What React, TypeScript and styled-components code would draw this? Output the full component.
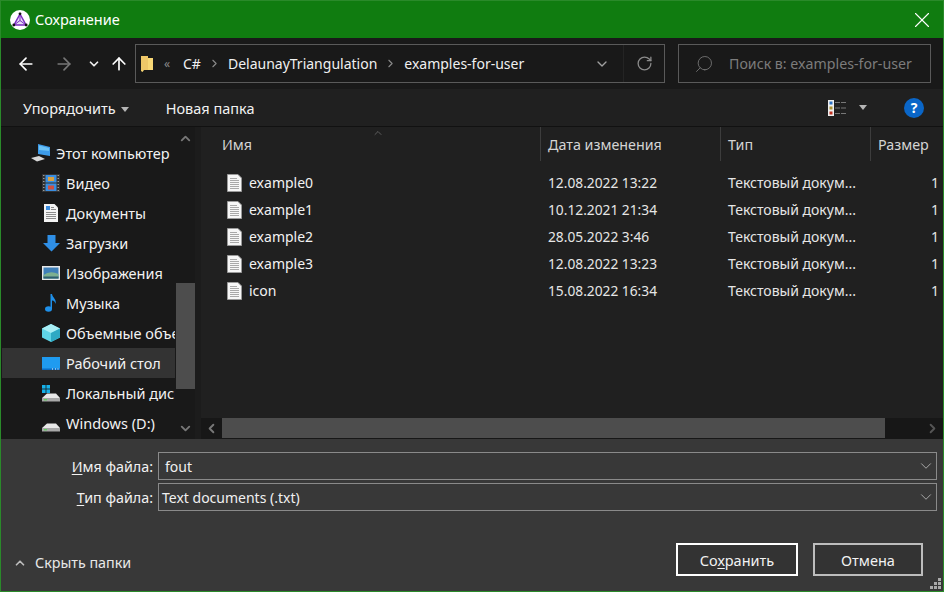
import { FC, ReactNode } from "react";
import styled, { createGlobalStyle } from "styled-components";
import { ArrowLeft, ArrowRight, ArrowUp, ChevronDown, ChevronLeft, ChevronRight, ChevronUp, RotateCw, Search, X } from "lucide-react";

const GlobalStyle = createGlobalStyle`
  html, body { margin: 0; padding: 0; background: #383838; }
  body {
    font-family: "Noto Sans", "Open Sans", sans-serif;
    font-size: 14.5px;
    color: #f2f2f2;
  }
`;

const Window = styled.div`
  width: 944px;
  height: 592px;
  box-sizing: border-box;
  border: 1px solid #2a8a2a;
  display: flex;
  flex-direction: column;
  overflow: hidden;
`;

const TitleBar = styled.div`
  height: 37px;
  flex: none;
  background: #107c10;
  display: flex;
  align-items: center;
  padding: 0 8px 0 9px;
  gap: 5px;
  color: #fff;
`;

const TitleText = styled.span`
  flex: 1;
  padding-bottom: 1px;
`;

const NavBar = styled.div`
  height: 51px;
  flex: none;
  background: #191919;
  display: flex;
  align-items: center;
  padding: 0 0 0 15px;
  box-sizing: border-box;
`;

const NavButtons = styled.div`
  width: 119px;
  flex: none;
  display: flex;
  align-items: center;
`;

const NavSlot = styled.span<{ $left: number }>`
  margin-left: ${(p) => p.$left}px;
  display: flex;
`;

const AddressBox = styled.div`
  width: 530px;
  height: 39px;
  flex: none;
  box-sizing: border-box;
  border: 1px solid #5a5a5a;
  display: flex;
  align-items: center;
  padding-left: 5px;
  font-size: 14px;
`;

const Crumb = styled.span`
  color: #f0f0f0;
  white-space: nowrap;
`;

const CrumbSep = styled.span`
  display: flex;
  width: 27px;
  justify-content: center;
  color: #8a8a8a;
`;

const Dim = styled.span`
  color: #8a8a8a;
  font-size: 12px;
  margin: 0 8px 0 11px;
  width: 11px;
`;

const AddressTail = styled.div`
  margin-left: auto;
  display: flex;
  height: 100%;
  align-items: center;
`;

const AddressChevron = styled.span`
  width: 42px;
  display: flex;
  justify-content: center;
  color: #a0a0a0;
`;

const RefreshSlot = styled.span`
  width: 40px;
  height: 100%;
  border-left: 1px solid #242424;
  display: flex;
  align-items: center;
  justify-content: center;
  color: #8c8c8c;
`;

const SearchBox = styled.div`
  margin-left: 13px;
  width: 253px;
  height: 39px;
  box-sizing: border-box;
  border: 1px solid #5a5a5a;
  display: flex;
  align-items: center;
  padding-left: 15px;
  gap: 15px;
  color: #7c7c7c;
  font-size: 14.2px;
  white-space: nowrap;
`;

const CommandBar = styled.div`
  height: 38px;
  flex: none;
  box-sizing: border-box;
  background: #202020;
  border-bottom: 1px solid #111;
  display: flex;
  align-items: center;
  padding: 0 19px 0 22px;
`;

const Caret = styled.span<{ $gap?: number }>`
  display: inline-block;
  width: 0;
  height: 0;
  border-left: 4.5px solid transparent;
  border-right: 4.5px solid transparent;
  border-top: 5px solid #b5b5b5;
  margin-left: ${(p) => p.$gap ?? 5}px;
  vertical-align: middle;
`;

const CommandItem = styled.span`
  margin-right: 37px;
  white-space: nowrap;
`;

const ViewGroup = styled.div`
  margin-left: auto;
  display: flex;
  align-items: center;
`;

const HelpBadge = styled.span`
  width: 20px;
  height: 20px;
  border-radius: 50%;
  background: #0a66c8;
  color: #fff;
  font-weight: 700;
  font-size: 14px;
  display: flex;
  align-items: center;
  justify-content: center;
  margin-left: 37px;
`;

const Body = styled.div`
  height: 312px;
  flex: none;
  display: flex;
  background: #202020;
`;

const Sidebar = styled.div`
  width: 194px;
  flex: none;
  background: #191919;
  display: flex;
`;

const Tree = styled.div`
  width: 174px;
  flex: none;
  padding-top: 11px;
  overflow: hidden;
  box-sizing: border-box;
`;

const TreeRow = styled.div<{ $active?: boolean; $indent: number }>`
  height: 30px;
  margin-left: 1px;
  display: flex;
  align-items: center;
  gap: 6px;
  padding-left: ${(p) => p.$indent}px;
  background: ${(p) => (p.$active ? "#333" : "transparent")};
  white-space: nowrap;
  overflow: hidden;
`;

const TreeIcon = styled.span`
  width: 18px;
  height: 18px;
  flex: none;
  display: flex;
  align-items: center;
  justify-content: center;
  & svg { flex: none; }
`;

const VScroll = styled.div`
  width: 19px;
  margin-left: 1px;
  flex: none;
  display: flex;
  flex-direction: column;
  align-items: stretch;
  color: #777;
`;

const ScrollEnd = styled.span`
  height: 22px;
  flex: none;
  display: flex;
  align-items: center;
  justify-content: center;
`;

const VTrack = styled.div`
  flex: 1;
  padding-top: 134px;
`;

const VThumb = styled.div`
  height: 106px;
  background: #4d4d4d;
`;

const Gutter = styled.div`
  width: 6px;
  flex: none;
  background: #1c1c1c;
`;

const Main = styled.div`
  flex: 1;
  min-width: 0;
  display: flex;
  flex-direction: column;
  position: relative;
`;

const Columns = styled.div`
  height: 34px;
  flex: none;
  display: grid;
  grid-template-columns: 340px 180px 150px 1fr;
  color: #d4d4d4;
  font-size: 14.3px;
`;

const ColHead = styled.div`
  padding-left: 7px;
  display: flex;
  align-items: center;
  border-right: 1px solid #3d3d3d;
  white-space: nowrap;
  overflow: hidden;
  &:first-child { padding-left: 21px; }
  &:last-child { border-right: 0; }
`;

const SortMark = styled.span`
  position: absolute;
  left: 171px;
  top: 0;
  color: #9a9a9a;
  display: flex;
`;

const FileList = styled.div`
  flex: 1;
  padding-top: 8px;
  overflow: hidden;
`;

const FileRow = styled.div`
  height: 27px;
  display: grid;
  grid-template-columns: 340px 180px 150px 1fr;
  align-items: center;
  white-space: nowrap;
  overflow: hidden;
  font-size: 14px;
`;

const NameCell = styled.div`
  padding-left: 26px;
  display: flex;
  align-items: center;
  gap: 7px;
`;

const Cell = styled.div`
  padding-left: 7px;
  color: #e6e6e6;
  overflow: hidden;
`;

const DateCell = styled(Cell)`
  font-size: 13.75px;
`;

const SizeCell = styled(Cell)`
  padding-left: 60px;
`;

const HScroll = styled.div`
  height: 21px;
  flex: none;
  background: #171717;
  display: flex;
  color: #777;
`;

const HEnd = styled.span`
  width: 21px;
  flex: none;
  display: flex;
  align-items: center;
  justify-content: center;
`;

const HThumb = styled.div`
  width: 663px;
  flex: none;
  background: #4d4d4d;
  margin-bottom: 1px;
`;

const HTrack = styled.div`
  flex: 1;
`;

const Footer = styled.div`
  flex: 1;
  background: #383838;
  display: flex;
  flex-direction: column;
  padding: 13px 6px 0 0;
  position: relative;
`;

const FieldRow = styled.div`
  display: flex;
  align-items: center;
  height: 28px;
  margin-bottom: 3px;
`;

const FieldLabel = styled.label`
  width: 157px;
  text-align: right;
  padding-right: 5px;
  box-sizing: border-box;
  flex: none;
  font-size: 14.3px;
`;

const FieldBox = styled.div`
  flex: 1;
  height: 28px;
  box-sizing: border-box;
  border: 1px solid #8a8a8a;
  display: flex;
  align-items: center;
  justify-content: space-between;
  padding: 0 1px 0 3px;
  color: #f0f0f0;
  font-size: 14px;
`;

const FieldValue = styled.span<{ $pad?: number }>`
  padding-left: ${(p) => p.$pad ?? 0}px;
`;

const Actions = styled.div`
  display: flex;
  align-items: flex-start;
  margin-top: 29px;
  padding-left: 12px;
`;

const Toggle = styled.span`
  display: flex;
  align-items: center;
  gap: 8px;
  margin-top: 10px;
  font-size: 14.3px;
  color: #e8e8e8;
`;

const Buttons = styled.div`
  margin-left: auto;
  display: flex;
  gap: 15px;
  padding-right: 14px;
`;

const Btn = styled.button<{ $primary?: boolean }>`
  width: ${(p) => (p.$primary ? 122 : 110)}px;
  height: 33px;
  padding: 0;
  background: #333;
  color: #f2f2f2;
  font: inherit;
  border: ${(p) => (p.$primary ? "2px solid #fff" : "2px solid #bdbdbd")};
`;

const Mnemonic = styled.span`
  text-decoration: underline;
  text-underline-offset: 2px;
`;

const Grip = styled.svg`
  position: absolute;
  right: 2px;
  bottom: 2px;
`;

const AppLogo: FC = () => (
  <svg width="20" height="20" viewBox="0 0 20 20">
    <circle cx="10" cy="10" r="10" fill="#fff" />
    <path d="M10 4 L16 15 H4 Z" fill="#e6dcf5" stroke="#7a2bc0" strokeWidth="1.5" />
    <path d="M10 4 V10.5 M4 15 L10 10.5 L16 15" stroke="#7a2bc0" strokeWidth="1" fill="none" />
    <circle cx="10" cy="3.8" r="1.4" fill="#111" />
    <circle cx="3.8" cy="15" r="1.4" fill="#111" />
    <circle cx="16.2" cy="15" r="1.4" fill="#111" />
  </svg>
);

const FolderIcon: FC = () => (
  <svg width="12" height="18" viewBox="0 0 12 18">
    <path d="M0 1 H7 V3 H12 V15 H3 L1.5 17 L0 16 Z" fill="#f8d775" />
    <path d="M0 1 H7 V15 H1.5 L0 16 Z" fill="#eec768" />
  </svg>
);

const FileIcon: FC = () => (
  <svg width="15" height="18" viewBox="0 0 15 18">
    <path d="M.5.5 H11 L14.5 4 V17.5 H.5 Z" fill="#f6f6f6" stroke="#9a9a9a" />
    <path d="M3 4.5 H10 M3 6.5 H12 M3 8.5 H12 M3 10.5 H12 M3 12.5 H12 M3 14.5 H12" stroke="#a8a8a8" />
  </svg>
);

const ViewIcon: FC = () => (
  <svg width="19" height="16" viewBox="0 0 19 16">
    <rect x="0" y="0" width="6" height="16" fill="#eee" />
    <rect x="1.5" y="1.5" width="3" height="3" fill="#2a6fc0" />
    <rect x="1.5" y="6.5" width="3" height="3" fill="#a89030" />
    <rect x="1.5" y="11.5" width="3" height="3" fill="#c03020" />
    <path d="M7 2.5 H19 M7 8 H19 M7 13.5 H19" stroke="#777" strokeDasharray="5 1" />
  </svg>
);

const PcIcon: FC = () => (
  <svg width="20" height="18" viewBox="0 0 20 18">
    <path d="M7 0 L19 3 V12 L7 10 Z" fill="#3d9be9" />
    <path d="M8 1.5 L18 4 V7 L8 6 Z" fill="#6bc1f5" />
    <path d="M0 14 L8 12 L14 15 L6 17.5 Z" fill="#d8d8d8" />
  </svg>
);

const VideoIcon: FC = () => (
  <svg width="18" height="18" viewBox="0 0 18 18">
    <rect width="18" height="18" fill="#333" />
    <path d="M1 1.5 H2.5 M1 4.5 H2.5 M1 7.5 H2.5 M1 10.5 H2.5 M1 13.5 H2.5 M1 16.5 H2.5 M15.5 1.5 H17 M15.5 4.5 H17 M15.5 7.5 H17 M15.5 10.5 H17 M15.5 13.5 H17 M15.5 16.5 H17" stroke="#999" />
    <rect x="3.5" y="1" width="11" height="7.5" fill="#3a8ee0" />
    <rect x="3.5" y="9.5" width="11" height="7.5" fill="#3a8ee0" />
    <rect x="6" y="3" width="6" height="4" fill="#d8a040" />
    <rect x="6" y="11.5" width="6" height="4" fill="#d05040" />
  </svg>
);

const DocIcon: FC = () => (
  <svg width="14" height="18" viewBox="0 0 14 18">
    <path d="M0 0 H10.5 L14 3.5 V18 H0 Z" fill="#f4f4f4" />
    <rect x="2" y="2" width="4" height="4" fill="#3d8ee0" />
    <path d="M7 3.5 H10 M7 5.5 H12 M2 8.5 H12 M2 10.5 H12 M2 12.5 H12 M2 14.5 H12" stroke="#8c8c8c" />
  </svg>
);

const DownIcon: FC = () => (
  <svg width="17" height="17" viewBox="0 0 17 17">
    <path d="M4.5 0 H12.5 V8 H17 L8.5 16.5 L0 8 H4.5 Z" fill="#2f8fe6" />
  </svg>
);

const PicIcon: FC = () => (
  <svg width="18" height="14" viewBox="0 0 18 14">
    <rect width="18" height="14" fill="#e8e8e8" />
    <rect x="1.5" y="1.5" width="15" height="11" fill="#3f7fb8" />
    <path d="M1.5 9 Q8 4 16.5 8 V12.5 H1.5 Z" fill="#7db090" />
    <rect x="1.5" y="10.5" width="15" height="2" fill="#2e5f70" />
  </svg>
);

const NoteIcon: FC = () => (
  <svg width="12" height="18" viewBox="0 0 12 18">
    <ellipse cx="3.5" cy="15" rx="3.5" ry="2.7" fill="#1e90ea" />
    <path d="M5.5 15 V0 H7 C7.5 4 12 5 10.5 10 C10 7 8 6.5 7 6.5 V15 Z" fill="#1e90ea" />
  </svg>
);

const CubeIcon: FC = () => (
  <svg width="18" height="18" viewBox="0 0 18 18">
    <path d="M9 0 L18 4.5 V13.5 L9 18 L0 13.5 V4.5 Z" fill="#5fd4e6" />
    <path d="M9 9 L18 4.5 L9 0 L0 4.5 Z" fill="#a8eef5" />
    <path d="M9 9 V18 L18 13.5 V4.5 Z" fill="#2ea9c4" />
  </svg>
);

const DesktopIcon: FC = () => (
  <svg width="18" height="13" viewBox="0 0 18 13">
    <rect width="18" height="13" fill="#1f9bf0" />
    <rect y="11.5" width="18" height="1.5" fill="#0b6cc4" />
    <path d="M10 12 H11 M13 12 H14 M15.5 12 H16.5" stroke="#fff" />
  </svg>
);

const DiskBody: FC = () => (
  <>
    <path d="M0 13 L5 8.5 H14 L18 13 Z" fill="#e8e8e8" />
    <rect y="13" width="18" height="3.5" fill="#a8a8a8" />
    <rect x="2" y="14" width="3" height="1.4" fill="#5fcf60" />
  </>
);

const LocalDiskIcon: FC = () => (
  <svg width="18" height="17" viewBox="0 0 18 17">
    <rect x="0" y="0" width="3.6" height="3.6" fill="#16b0e8" />
    <rect x="4.4" y="0" width="3.6" height="3.6" fill="#16b0e8" />
    <rect x="0" y="4.4" width="3.6" height="3.6" fill="#16b0e8" />
    <rect x="4.4" y="4.4" width="3.6" height="3.6" fill="#16b0e8" />
    <DiskBody />
  </svg>
);

const DiskIcon: FC = () => (
  <svg width="18" height="17" viewBox="0 0 18 17">
    <DiskBody />
  </svg>
);

const tree: { icon: ReactNode; label: string; active?: boolean }[] = [
  { icon: <VideoIcon />, label: "Видео" },
  { icon: <DocIcon />, label: "Документы" },
  { icon: <DownIcon />, label: "Загрузки" },
  { icon: <PicIcon />, label: "Изображения" },
  { icon: <NoteIcon />, label: "Музыка" },
  { icon: <CubeIcon />, label: "Объемные объекты" },
  { icon: <DesktopIcon />, label: "Рабочий стол", active: true },
  { icon: <LocalDiskIcon />, label: "Локальный диск (C:)" },
  { icon: <DiskIcon />, label: "Windows (D:)" },
];

const files = [
  ["example0", "12.08.2022 13:22"],
  ["example1", "10.12.2021 21:34"],
  ["example2", "28.05.2022 3:46"],
  ["example3", "12.08.2022 13:23"],
  ["icon", "15.08.2022 16:34"],
];

const App: FC = () => (
  <Window>
    <GlobalStyle />
    <TitleBar>
      <AppLogo />
      <TitleText>Сохранение</TitleText>
      <X size={26} strokeWidth={1} />
    </TitleBar>

    <NavBar>
      <NavButtons>
        <NavSlot $left={0}><ArrowLeft size={20} strokeWidth={2} color="#fff" /></NavSlot>
        <NavSlot $left={18}><ArrowRight size={20} strokeWidth={2} color="#777" /></NavSlot>
        <NavSlot $left={13}><ChevronDown size={14} strokeWidth={3} color="#eee" /></NavSlot>
        <NavSlot $left={8}><ArrowUp size={20} strokeWidth={2} color="#fff" /></NavSlot>
      </NavButtons>
      <AddressBox>
        <FolderIcon />
        <Dim>«</Dim>
        <Crumb>C#</Crumb>
        <CrumbSep><ChevronRight size={13} strokeWidth={2} /></CrumbSep>
        <Crumb>DelaunayTriangulation</Crumb>
        <CrumbSep><ChevronRight size={13} strokeWidth={2} /></CrumbSep>
        <Crumb>examples-for-user</Crumb>
        <AddressTail>
          <AddressChevron><ChevronDown size={16} strokeWidth={2} /></AddressChevron>
          <RefreshSlot><RotateCw size={17} strokeWidth={1.8} /></RefreshSlot>
        </AddressTail>
      </AddressBox>
      <SearchBox>
        <Search size={20} strokeWidth={1} style={{ transform: "rotate(90deg)" }} />
        <span>Поиск в: examples-for-user</span>
      </SearchBox>
    </NavBar>

    <CommandBar>
      <CommandItem>Упорядочить<Caret /></CommandItem>
      <CommandItem>Новая папка</CommandItem>
      <ViewGroup>
        <ViewIcon />
        <Caret $gap={12} />
        <HelpBadge>?</HelpBadge>
      </ViewGroup>
    </CommandBar>

    <Body>
      <Sidebar>
        <Tree>
          <TreeRow $indent={30}>
            <TreeIcon><PcIcon /></TreeIcon>
            Этот компьютер
          </TreeRow>
          {tree.map((t) => (
            <TreeRow key={t.label} $indent={40} $active={t.active}>
              <TreeIcon>{t.icon}</TreeIcon>
              {t.label}
            </TreeRow>
          ))}
        </Tree>
        <VScroll>
          <ScrollEnd><ChevronUp size={15} strokeWidth={3} /></ScrollEnd>
          <VTrack><VThumb /></VTrack>
          <ScrollEnd><ChevronDown size={15} strokeWidth={3} /></ScrollEnd>
        </VScroll>
      </Sidebar>
      <Gutter />
      <Main>
        <SortMark><ChevronUp size={12} strokeWidth={1} /></SortMark>
        <Columns>
          <ColHead>Имя</ColHead>
          <ColHead>Дата изменения</ColHead>
          <ColHead>Тип</ColHead>
          <ColHead>Размер</ColHead>
        </Columns>
        <FileList>
          {files.map(([name, date]) => (
            <FileRow key={name}>
              <NameCell><FileIcon />{name}</NameCell>
              <DateCell>{date}</DateCell>
              <Cell>Текстовый докум...</Cell>
              <SizeCell>1</SizeCell>
            </FileRow>
          ))}
        </FileList>
        <HScroll>
          <HEnd><ChevronLeft size={15} strokeWidth={3} /></HEnd>
          <HThumb />
          <HTrack />
          <HEnd><ChevronRight size={15} strokeWidth={3} color="#555" /></HEnd>
        </HScroll>
      </Main>
    </Body>

    <Footer>
      <FieldRow>
        <FieldLabel><Mnemonic>И</Mnemonic>мя файла:</FieldLabel>
        <FieldBox>
          <FieldValue $pad={3}>fout</FieldValue>
          <ChevronDown size={18} strokeWidth={1} color="#ccc" />
        </FieldBox>
      </FieldRow>
      <FieldRow>
        <FieldLabel><Mnemonic>Т</Mnemonic>ип файла:</FieldLabel>
        <FieldBox>
          <FieldValue>Text documents (.txt)</FieldValue>
          <ChevronDown size={18} strokeWidth={1} color="#ccc" />
        </FieldBox>
      </FieldRow>
      <Actions>
        <Toggle><ChevronUp size={14} strokeWidth={3} color="#bbb" />Скрыть папки</Toggle>
        <Buttons>
          <Btn $primary>Со<Mnemonic>х</Mnemonic>ранить</Btn>
          <Btn>Отмена</Btn>
        </Buttons>
      </Actions>
      <Grip width="11" height="11" viewBox="0 0 11 11" fill="#aaa">
        <rect x="8" y="0" width="3" height="3" />
        <rect x="4" y="4" width="3" height="3" />
        <rect x="8" y="4" width="3" height="3" />
        <rect x="0" y="8" width="3" height="3" />
        <rect x="4" y="8" width="3" height="3" />
        <rect x="8" y="8" width="3" height="3" />
      </Grip>
    </Footer>
  </Window>
);

export default App;
